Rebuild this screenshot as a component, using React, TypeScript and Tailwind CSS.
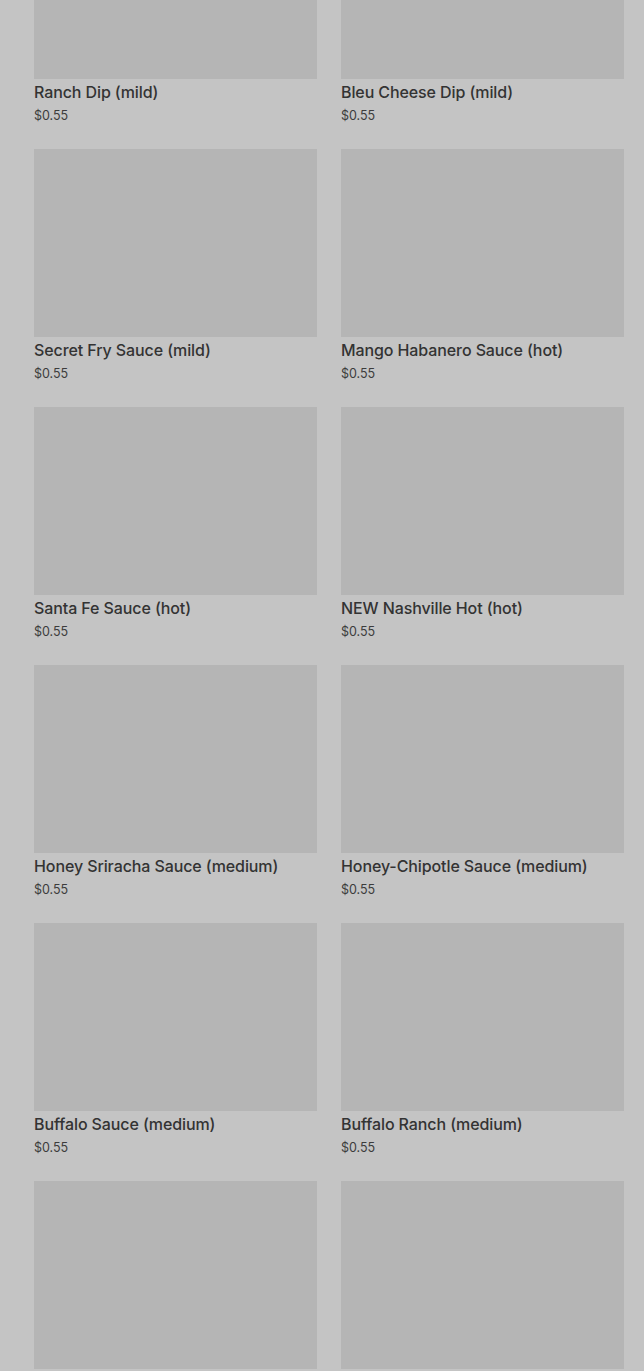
import React from "react";

const items = [
  "Ranch Dip (mild)",
  "Bleu Cheese Dip (mild)",
  "Secret Fry Sauce (mild)",
  "Mango Habanero Sauce (hot)",
  "Santa Fe Sauce (hot)",
  "NEW Nashville Hot (hot)",
  "Honey Sriracha Sauce (medium)",
  "Honey-Chipotle Sauce (medium)",
  "Buffalo Sauce (medium)",
  "Buffalo Ranch (medium)",
];

export default function App() {
  return (
    <div
      className="h-[1371px] overflow-hidden bg-[#c4c4c4] pl-[34px] pr-[20px]"
      style={{ fontFamily: "Inter, 'Noto Sans', sans-serif" }}
    >
      <div className="-mt-[109px] grid grid-cols-2 gap-x-[24px]">
        {items.map((name) => (
          <div key={name} className="flex flex-col pb-[24px]">
            <div className="h-[188px] bg-[#b5b5b5]" />
            <div className="mt-[3px] text-[16px] leading-[20px] font-medium tracking-[-0.1px] text-[#333333] whitespace-nowrap">
              {name}
            </div>
            <div className="mt-[5px] text-[12.5px] leading-[18px] text-[#3c3c3c]">$0.55</div>
          </div>
        ))}
        <div className="h-[188px] bg-[#b5b5b5]" />
        <div className="h-[188px] bg-[#b5b5b5]" />
      </div>
    </div>
  );
}
